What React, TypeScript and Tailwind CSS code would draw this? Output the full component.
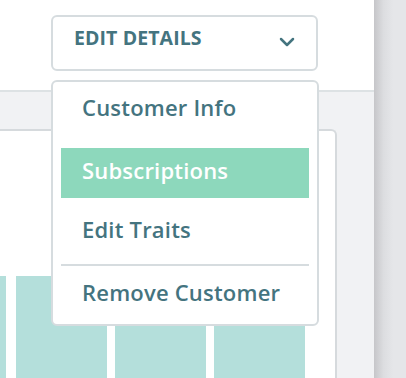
import { ChevronDown } from "lucide-react";

const font = { fontFamily: '"Open Sans", "Liberation Sans", sans-serif' };

// dropdown entries, one highlighted
function MenuItem({ label, active, className = "" }: { label: string; active?: boolean; className?: string }) {
  return (
    <div
      className={`flex h-[50px] items-center pb-[6px] pl-[21px] text-[22px] font-semibold tracking-[0.2px] ${
        active ? "bg-[#8dd8bc] text-white" : "text-[#44747f]"
      } ${className}`}
    >
      {label}
    </div>
  );
}

export default function App() {
  return (
    <div className="flex h-[378px] w-[406px] overflow-hidden bg-white" style={font}>
      <div className="relative flex w-[374px] flex-col">
        {/* header */}
        <div className="flex h-[92px] shrink-0 justify-end border-b-2 border-[#dde2e4] bg-white pr-[56px] pt-[15px]">
          <button className="flex h-[56px] w-[267px] items-center justify-between rounded-md border-2 border-[#d6dcdf] bg-white pl-[21px] pr-[17px] text-[19.5px] font-bold tracking-[0.1px] text-[#44747f]">
            <span className="-mt-[10px]">EDIT DETAILS</span>
            <ChevronDown className="-mt-[3px] h-[24px] w-[24px]" strokeWidth={2.5} />
          </button>
        </div>

        {/* content */}
        <div className="flex flex-1 flex-col bg-[#f1f2f4] pr-[37px] pt-[37px]">
          <div className="-ml-[10px] flex flex-1 flex-col justify-end rounded-tr-md border-2 border-b-0 border-l-0 border-[#d6dadd] bg-white pr-[30px] pt-[145px]">
            <div className="flex flex-1 gap-2">
              <div className="w-[16px] bg-[#b4dfdb]" />
              <div className="ml-[2px] w-[91px] bg-[#b4dfdb]" />
              <div className="w-[91px] bg-[#b4dfdb]" />
              <div className="w-[91px] bg-[#b4dfdb]" />
            </div>
          </div>
        </div>

        {/* open menu */}
        <div className="absolute left-[51px] top-[80px] flex w-[268px] flex-col rounded-md border-2 border-[#d6dcdf] bg-white px-[8px] pb-[4px] pt-[3px]">
          <MenuItem label="Customer Info" />
          <MenuItem label="Subscriptions" active className="mt-[13px]" />
          <MenuItem label="Edit Traits" className="mt-[9px]" />
          <div className="mt-[7px] h-[2px] bg-[#d6dcdf]" />
          <MenuItem label="Remove Customer" className="mt-[4px]" />
        </div>
      </div>
      <div className="w-[32px] bg-[linear-gradient(to_right,#c6c6c9,#dcdde0_30%,#e5e6e9_60%)]" />
    </div>
  );
}
